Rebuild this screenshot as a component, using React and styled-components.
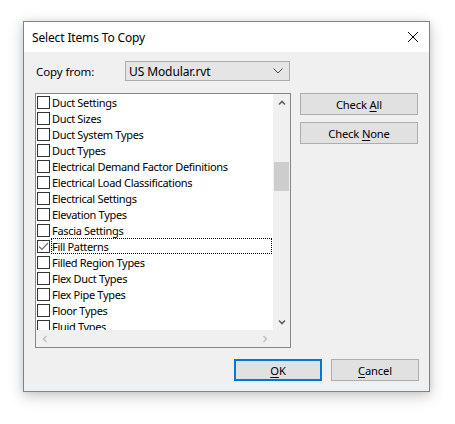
import React from "react";
import styled, { createGlobalStyle } from "styled-components";

const Global = createGlobalStyle`
  html, body { margin: 0; padding: 0; background: #ffffff; }
  body { font-family: "Noto Sans", "Segoe UI", sans-serif; font-size: 11px; color: #000; }
  * { box-sizing: border-box; }
`;

const Page = styled.div`
  width: 455px;
  height: 424px;
  padding: 21px 0 0 23px;
  background: #fff;
`;

const Window = styled.div`
  width: 407px;
  height: 371px;
  border: 1px solid #4a90d0;
  background: #f0f0f0;
  display: flex;
  flex-direction: column;
  box-shadow: 0 4px 14px rgba(0, 0, 0, 0.22), 0 0 6px rgba(0, 0, 0, 0.08);
`;

const TitleBar = styled.div`
  height: 30px;
  background: #ffffff;
  display: flex;
  align-items: center;
  justify-content: space-between;
  padding: 0 10px 0 8px;
  flex-shrink: 0;
`;

const Title = styled.span`
  font-size: 12px;
  color: #000;
  letter-spacing: -0.15px;
`;

const Close = styled.span`
  width: 12px;
  height: 12px;
  display: flex;
`;

const Body = styled.div`
  flex: 1;
  display: flex;
  flex-direction: column;
  padding: 9px 10px 10px 11px;
`;

const FromRow = styled.div`
  display: flex;
  align-items: center;
  height: 20px;
`;

const Label = styled.span`
  width: 90px;
  padding-left: 1px;
  font-size: 11.5px;
  letter-spacing: -0.1px;
`;

const Select = styled.div`
  width: 165px;
  height: 20px;
  border: 1px solid #acacac;
  background: #e5e5e5;
  display: flex;
  align-items: center;
  justify-content: space-between;
  padding: 0 6px 0 3px;
  font-size: 12px;
  letter-spacing: -0.1px;
`;

const Main = styled.div`
  display: flex;
  margin-top: 12px;
  gap: 9px;
  align-items: flex-start;
`;

const ListBox = styled.div`
  width: 256px;
  height: 255px;
  border: 1px solid #828790;
  background: #fff;
  display: grid;
  grid-template-columns: 1fr 17px;
  grid-template-rows: 1fr 17px;
`;

const Viewport = styled.div`
  overflow: hidden;
  display: flex;
  flex-direction: column;
`;

const Row = styled.div`
  height: 16px;
  display: flex;
  align-items: center;
  flex-shrink: 0;
  padding-left: 1px;
`;

const Box = styled.span`
  width: 13px;
  height: 13px;
  border: 1px solid #333;
  background: #fff;
  flex-shrink: 0;
  display: flex;
  align-items: center;
  justify-content: center;
`;

const ItemText = styled.span`
  flex: 1;
  height: 16px;
  line-height: 15px;
  margin-left: 1px;
  margin-right: 1px;
  white-space: nowrap;
  border: 1px dotted ${(p) => (p.$focus ? "#000" : "transparent")};
  font-size: 11px;
  letter-spacing: -0.32px;
`;

const VScroll = styled.div`
  background: #f0f0f0;
  display: flex;
  flex-direction: column;
`;

const HScroll = styled.div`
  background: #f0f0f0;
  display: flex;
  justify-content: space-between;
  align-items: center;
`;

const Corner = styled.div`
  background: #f0f0f0;
`;

const Arrow = styled.span`
  width: 17px;
  height: 17px;
  display: flex;
  align-items: center;
  justify-content: center;
  flex-shrink: 0;
`;

const Track = styled.div`
  flex: 1;
  display: flex;
  flex-direction: column;
`;

const Thumb = styled.div`
  width: 15px;
  margin-left: 1px;
  height: ${(p) => p.$h}px;
  margin-top: ${(p) => p.$top}px;
  background: #cdcdcd;
`;

const Side = styled.div`
  display: flex;
  flex-direction: column;
  gap: 7px;
`;

const Button = styled.button`
  width: ${(p) => p.$w}px;
  height: 22px;
  font-family: "Noto Sans", "Segoe UI", sans-serif;
  font-size: 11.2px;
  color: #000;
  background: #e1e1e1;
  border: ${(p) => (p.$default ? "2px solid #0078d7" : "1px solid #adadad")};
  padding: 0;
  display: flex;
  align-items: center;
  justify-content: center;
  letter-spacing: -0.15px;
  u { text-decoration: underline; text-underline-offset: 2px; }
`;

const Footer = styled.div`
  margin-top: auto;
  display: flex;
  justify-content: flex-end;
  gap: 9px;
`;

const items = [
  "Duct Settings",
  "Duct Sizes",
  "Duct System Types",
  "Duct Types",
  "Electrical Demand Factor Definitions",
  "Electrical Load Classifications",
  "Electrical Settings",
  "Elevation Types",
  "Fascia Settings",
  "Fill Patterns",
  "Filled Region Types",
  "Flex Duct Types",
  "Flex Pipe Types",
  "Floor Types",
  "Fluid Types",
];

const Chevron = ({ dir, color = "#606060", size = 8 }) => {
  const paths = {
    up: "M1 5.5 L4 2.5 L7 5.5",
    down: "M1 2.5 L4 5.5 L7 2.5",
    left: "M5.5 1 L2.5 4 L5.5 7",
    right: "M2.5 1 L5.5 4 L2.5 7",
  };
  return (
    <svg width={size} height={size} viewBox="0 0 8 8">
      <path d={paths[dir]} fill="none" stroke={color} strokeWidth="1.6" />
    </svg>
  );
};

export default function App() {
  return (
    <>
      <Global />
      <Page>
        <Window>
          <TitleBar>
            <Title>Select Items To Copy</Title>
            <Close>
              <svg width="12" height="12" viewBox="0 0 12 12">
                <path d="M1 1 L11 11 M11 1 L1 11" stroke="#000" strokeWidth="1" />
              </svg>
            </Close>
          </TitleBar>
          <Body>
            <FromRow>
              <Label>Copy from:</Label>
              <Select>
                <span>US Modular.rvt</span>
                <svg width="10" height="6" viewBox="0 0 10 6">
                  <path d="M0.5 0.5 L5 5 L9.5 0.5" fill="none" stroke="#444" strokeWidth="1" />
                </svg>
              </Select>
            </FromRow>
            <Main>
              <ListBox>
                <Viewport>
                  {items.map((it) => (
                    <Row key={it}>
                      <Box>
                        {it === "Fill Patterns" && (
                          <svg width="11" height="11" viewBox="0 0 11 11">
                            <path d="M1 5.5 L4 8.5 L10 2" fill="none" stroke="#6b6b6b" strokeWidth="1.2" />
                          </svg>
                        )}
                      </Box>
                      <ItemText $focus={it === "Fill Patterns"}>{it}</ItemText>
                    </Row>
                  ))}
                </Viewport>
                <VScroll>
                  <Arrow><Chevron dir="up" /></Arrow>
                  <Track>
                    <Thumb $top={51} $h={29} />
                  </Track>
                  <Arrow><Chevron dir="down" /></Arrow>
                </VScroll>
                <HScroll>
                  <Arrow><Chevron dir="left" color="#c2c2c2" /></Arrow>
                  <Arrow><Chevron dir="right" color="#c2c2c2" /></Arrow>
                </HScroll>
                <Corner />
              </ListBox>
              <Side>
                <Button $w={118}>Check&nbsp;<u>A</u>ll</Button>
                <Button $w={118}>Check&nbsp;<u>N</u>one</Button>
              </Side>
            </Main>
            <Footer>
              <Button $w={88} $default><u>O</u>K</Button>
              <Button $w={88}><u>C</u>ancel</Button>
            </Footer>
          </Body>
        </Window>
      </Page>
    </>
  );
}
